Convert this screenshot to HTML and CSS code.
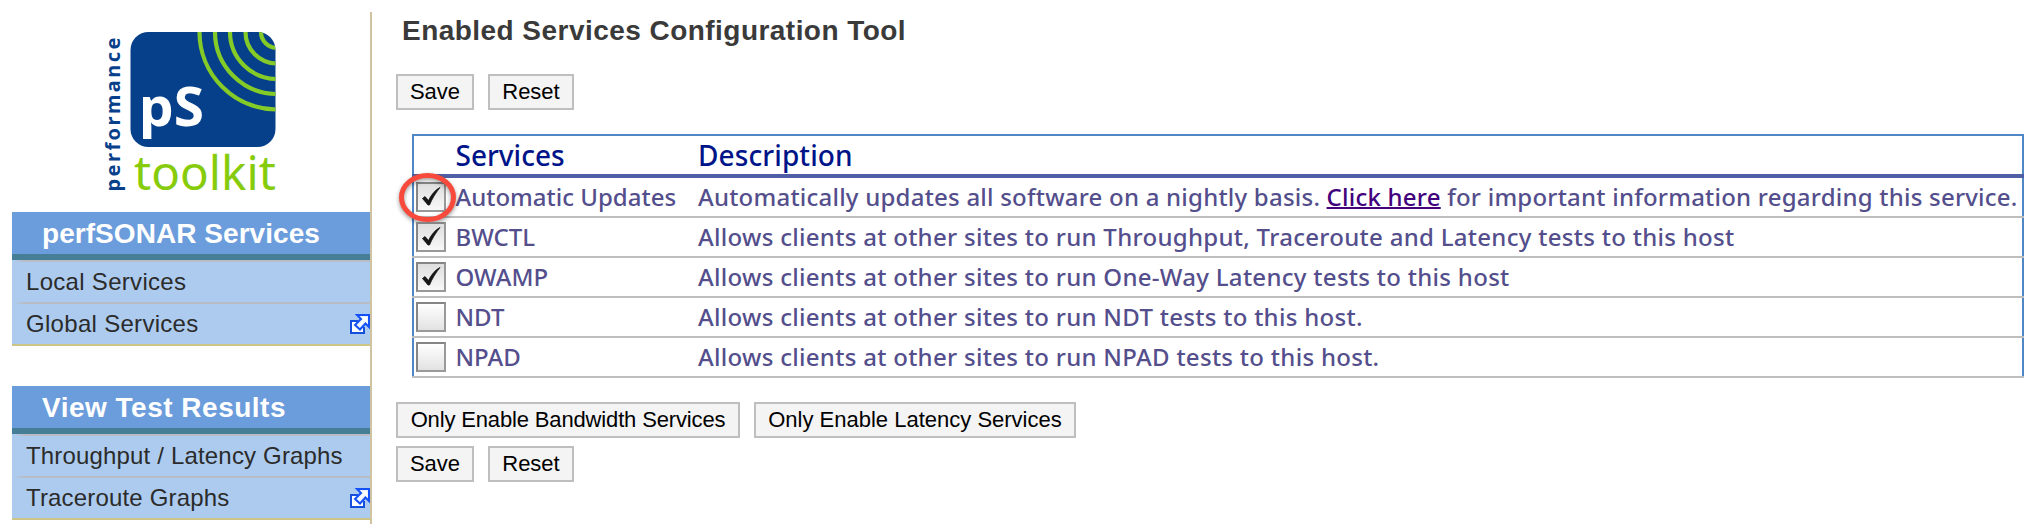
FILE: index.html
```html
<!DOCTYPE html>
<html lang="en">
<head>
<meta charset="utf-8">
<title>Enabled Services Configuration Tool</title>
<link rel="stylesheet" href="styles.css">
</head>
<body>
<svg class="defs" width="0" height="0" aria-hidden="true">
  <symbol id="external" viewBox="0 0 20 20">
    <path d="M8 7H1V19H14V13" fill="#fff" stroke="#1450dc" stroke-width="2"/>
    <path d="M7 1H19V13L15.500 9.500L10 15.500L5 11L11 5Z" fill="#e8f2ff" stroke="#1450f8" stroke-width="2"/>
    <path d="M11 3H17V9L14.500 6.500L9.500 12L8.500 11L13.500 5.500Z" fill="#fff"/>
  </symbol>
  <symbol id="tick" viewBox="0 0 26 26">
    <path d="M4.500 14.500L7 12.500L10.500 16.500C13 11 17 6 22 3.500C17.500 9 14 15 11.500 21H10Z" fill="#151515" stroke="#151515" stroke-width="0.800"/>
  </symbol>
</svg>
<div class="page">
  <aside class="sidebar">
    <svg class="logo" viewBox="0 0 180 170" width="180" height="170">
      <defs><clipPath id="tile"><rect x="30.500" y="7" width="145" height="115" rx="18"/></clipPath></defs>
      <g clip-path="url(#tile)">
        <rect x="30" y="7" width="146" height="115" fill="#07408a"/>
        <g fill="none" stroke="#84cb28" stroke-width="4.200">
          <circle cx="177" cy="7" r="77.500"/><circle cx="177" cy="7" r="62"/><circle cx="177" cy="7" r="47"/><circle cx="177" cy="7" r="31.500"/><circle cx="177" cy="7" r="16"/>
        </g>
      </g>
      <text class="logo-ps" x="39" y="100.500" textLength="65" lengthAdjust="spacingAndGlyphs">pS</text>
      <text class="logo-kit" x="34" y="165" textLength="142" lengthAdjust="spacingAndGlyphs">toolkit</text>
      <text class="logo-perf" transform="translate(19.500 166.500) rotate(-90)" textLength="154">performance</text>
    </svg>
    <nav class="menu">
      <h2 class="menu-title t-perf">perfSONAR Services</h2>
      <a class="menu-item">Local Services</a>
      <a class="menu-item">Global Services<svg class="ext"><use href="#external"/></svg></a>
    </nav>
    <nav class="menu">
      <h2 class="menu-title t-view">View Test Results</h2>
      <a class="menu-item long">Throughput / Latency Graphs</a>
      <a class="menu-item long">Traceroute Graphs<svg class="ext"><use href="#external"/></svg></a>
    </nav>
  </aside>
  <main class="main">
    <h1 class="title">Enabled Services Configuration Tool</h1>
    <div class="buttons"><button class="btn save">Save</button><button class="btn reset">Reset</button></div>
    <div class="table">
      <div class="row head"><span class="check"></span><span class="name">Services</span><span class="desc">Description</span></div>
      <div class="row updates"><span class="check"><span class="box on"><svg><use href="#tick"/></svg></span><svg class="ring" viewBox="0 0 64 60"><ellipse cx="32.500" cy="28.500" rx="26" ry="22"/></svg></span><span class="name">Automatic Updates</span><span class="desc">Automatically updates all software on a nightly basis. <a class="link">Click here</a> for important information regarding this service.</span></div>
      <div class="row"><span class="check"><span class="box on"><svg><use href="#tick"/></svg></span></span><span class="name">BWCTL</span><span class="desc">Allows clients at other sites to run Throughput, Traceroute and Latency tests to this host</span></div>
      <div class="row"><span class="check"><span class="box on"><svg><use href="#tick"/></svg></span></span><span class="name">OWAMP</span><span class="desc">Allows clients at other sites to run One-Way Latency tests to this host</span></div>
      <div class="row"><span class="check"><span class="box"></span></span><span class="name">NDT</span><span class="desc">Allows clients at other sites to run NDT tests to this host.</span></div>
      <div class="row"><span class="check"><span class="box"></span></span><span class="name">NPAD</span><span class="desc">Allows clients at other sites to run NPAD tests to this host.</span></div>
    </div>
    <div class="buttons presets"><button class="btn bandwidth">Only Enable Bandwidth Services</button><button class="btn latency">Only Enable Latency Services</button></div>
    <div class="buttons"><button class="btn save">Save</button><button class="btn reset">Reset</button></div>
  </main>
</div>
</body>
</html>
```

FILE: styles.css
```css
* { box-sizing: border-box; }
body { margin: 0; background: #fff; font-family: "Liberation Sans", Arial, sans-serif; overflow: hidden; }
.defs { display: block; height: 0; }
.page { display: flex; height: 524px; padding-top: 12px; }
.sidebar { width: 372px; flex: none; padding: 13px 0 0 12px; border-right: 2px solid #cfc3a0; }
.logo { display: block; margin: 0 0 17px 88px; overflow: visible; font-family: "Noto Sans", sans-serif; }
.logo-ps { font-size: 53px; font-weight: 700; fill: #fff; }
.logo-kit { font-size: 47px; fill: #87cc0c; }
.logo-perf { font-size: 20px; font-weight: 700; fill: #07408a; }
.menu { margin-bottom: 40px; background: #adcbee; border-bottom: 2px solid #cdc588; }
.menu-title { margin: 0; height: 48px; padding-left: 30px; background: #6b9cdb; border-bottom: 6px solid #467e98; color: #fff; font-size: 28px; line-height: 44px; white-space: nowrap; }
.t-perf { letter-spacing: 0.05px; }
.t-view { letter-spacing: 0.5px; }
.menu-item { display: flex; justify-content: space-between; align-items: center; height: 42px; padding-left: 14px; border-top: 2px solid; border-image: linear-gradient(90deg, #adcbee 4px, #b9bcc4 14px) 2; color: #2b2b2b; font-size: 24px; line-height: 40px; white-space: nowrap; letter-spacing: 0.3px; }
.menu-item.long { letter-spacing: 0.17px; }
.ext { width: 20px; height: 20px; }
.main { padding-left: 24px; }
.title { margin: 3px 0 29px 6px; font-size: 28px; line-height: 32px; height: 30px; color: #3a3a3a; white-space: nowrap; letter-spacing: 0.46px; }
.buttons { display: flex; gap: 14px; margin-bottom: 8px; }
.btn { height: 36px; padding: 0; border: 2px solid #bfbfbf; background: #f4f4f4; color: #000; font: 22px/32px "Liberation Sans", Arial, sans-serif; white-space: nowrap; }
.save { width: 78px; }
.reset { width: 86px; }
.bandwidth { width: 344px; letter-spacing: -0.15px; }
.latency { width: 322px; }
.table { width: 1612px; margin: 24px 0 24px 16px; border-top: 2px solid #4f86c6; font-family: "Noto Sans", sans-serif; font-weight: 500; color: #544f8c; }
.row { display: flex; height: 40px; border-bottom: 2px solid #bebebe; box-shadow: inset 2px 0 #4f86c6, inset -2px 0 #4f86c6; font-size: 24px; line-height: 38px; white-space: nowrap; }
.head { height: 42px; border-bottom: 4px solid #505fa5; color: #001489; font-size: 28px; line-height: 38px; }
.check { position: relative; width: 43.5px; padding: 4px 0 0 4px; flex: none; }
.name { width: 242.5px; flex: none; }
.desc { letter-spacing: 0.29px; }
.head .desc { letter-spacing: 0.1px; }
.updates .desc { letter-spacing: 0.22px; }
.link { color: #42007c; text-decoration: underline; text-decoration-thickness: 2px; }
.box { display: block; width: 30px; height: 30px; border: 2px solid; border-color: #858585 #999 #999 #858585; background: linear-gradient(#fff, #e2e2e2); }
.box.on { background: linear-gradient(#dedede, #f8f8f8); }
.box svg { display: block; width: 26px; height: 26px; }
.ring { position: absolute; left: -17px; top: -9px; width: 64px; height: 60px; fill: none; stroke: #f84a3c; stroke-width: 5; filter: drop-shadow(0 2px 2px rgba(0,0,0,.4)); }
```
